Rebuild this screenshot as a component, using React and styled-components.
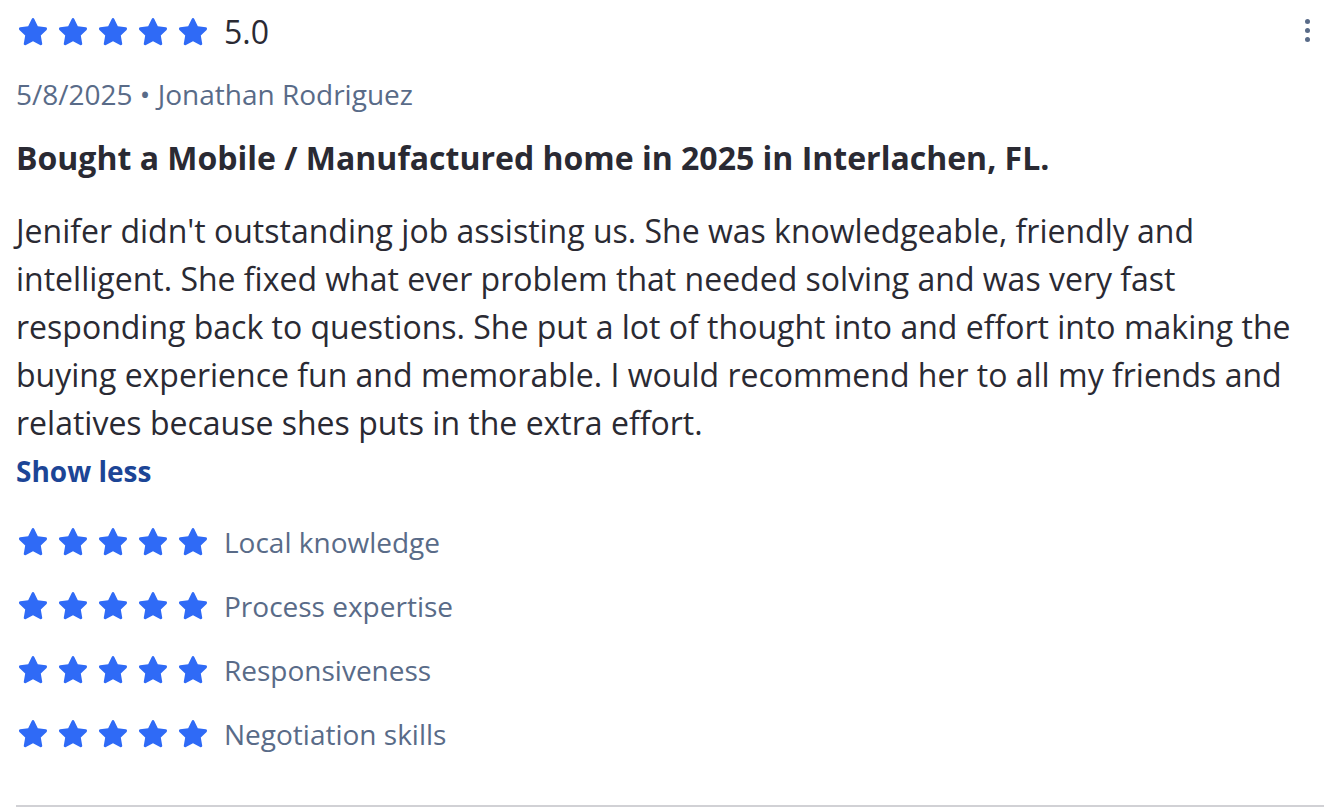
import React from "react";
import styled, { createGlobalStyle } from "styled-components";

const GlobalStyle = createGlobalStyle`
    body {
        margin: 0;
        background: #ffffff;
        font-family: "Open Sans", "Noto Sans", sans-serif;
    }
`;

const subRatings = [
    "Local knowledge",
    "Process expertise",
    "Responsiveness",
    "Negotiation skills",
];

const Star = () => (
    <StarSvg viewBox="0 0 24 24">
        <path
            d="M12 2.2c.4 0 .7.2.9.6l2.5 5.1 5.6.8c.9.1 1.2 1.2.6 1.8l-4.1 4 1 5.6c.2.9-.8 1.5-1.5 1.1L12 18.6l-5 2.6c-.8.4-1.7-.2-1.5-1.1l1-5.6-4.1-4c-.6-.6-.3-1.7.6-1.8l5.6-.8 2.5-5.1c.2-.4.5-.6.9-.6z"
            fill="#2f6af6"
        />
    </StarSvg>
);

const Stars = () => (
    <StarRow>
        {[0, 1, 2, 3, 4].map((i) => (
            <Star key={i} />
        ))}
    </StarRow>
);

export default function App() {
    return (
        <>
            <GlobalStyle />
            <Card>
                <TopRow>
                    <RatingGroup>
                        <Stars />
                        <Score>5.0</Score>
                    </RatingGroup>
                    <MoreButton aria-label="More options">
                        <span />
                        <span />
                        <span />
                    </MoreButton>
                </TopRow>
                <Meta>5/8/2025 • Jonathan Rodriguez</Meta>
                <Title>Bought a Mobile / Manufactured home in 2025 in Interlachen, FL.</Title>
                <Body>
                    Jenifer didn't outstanding job assisting us. She was knowledgeable, friendly and
                    intelligent. She fixed what ever problem that needed solving and was very fast
                    responding back to questions. She put a lot of thought into and effort into making the
                    buying experience fun and memorable. I would recommend her to all my friends and
                    relatives because shes puts in the extra effort.
                </Body>
                <ShowLess>Show less</ShowLess>
                <SubList>
                    {subRatings.map((label) => (
                        <SubRow key={label}>
                            <Stars />
                            <SubLabel>{label}</SubLabel>
                        </SubRow>
                    ))}
                </SubList>
            </Card>
        </>
    );
}

const Card = styled.div`
    margin: 0 6px 0 16px;
    padding-top: 12px;
    padding-bottom: 51px;
    border-bottom: 2px solid #d1d1d5;
    display: flex;
    flex-direction: column;
`;

const TopRow = styled.div`
    display: flex;
    align-items: center;
    justify-content: space-between;
    height: 40px;
`;

const RatingGroup = styled.div`
    display: flex;
    align-items: center;
    gap: 14px;
`;

const StarRow = styled.div`
    display: flex;
    align-items: center;
    gap: 6px;
`;

const StarSvg = styled.svg`
    width: 34px;
    height: 34px;
    display: block;
`;

const Score = styled.span`
    font-size: 32px;
    color: #2a2a33;
    line-height: 40px;
`;

const MoreButton = styled.button`
    border: none;
    background: none;
    padding: 0;
    width: 24px;
    height: 40px;
    margin: -4px 5px 0 0;
    display: flex;
    flex-direction: column;
    align-items: center;
    justify-content: center;
    gap: 4px;

    & > span {
        width: 5px;
        height: 5px;
        border-radius: 50%;
        background: #596b88;
    }
`;

const Meta = styled.div`
    margin-top: 22px;
    font-size: 28px;
    line-height: 40px;
    color: #596b88;
`;

const Title = styled.h2`
    margin: 24px 0 0;
    font-size: 32px;
    font-weight: 700;
    line-height: 40px;
    color: #2a2a33;
`;

const Body = styled.p`
    margin: 29px 0 0;
    font-size: 32px;
    line-height: 48px;
    color: #2a2a33;
`;

const ShowLess = styled.button`
    align-self: flex-start;
    border: none;
    background: none;
    padding: 0;
    font-family: inherit;
    font-size: 28px;
    font-weight: 700;
    line-height: 48px;
    color: #1c4596;
    cursor: pointer;
`;

const SubList = styled.div`
    margin-top: 27px;
    display: flex;
    flex-direction: column;
    gap: 24px;
`;

const SubRow = styled.div`
    display: flex;
    align-items: center;
    gap: 14px;
    height: 40px;
`;

const SubLabel = styled.span`
    font-size: 28px;
    color: #596b88;
`;
